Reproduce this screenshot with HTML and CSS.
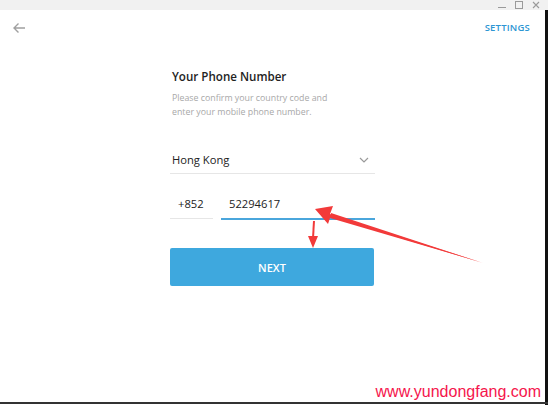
FILE: index.html
```html
<!DOCTYPE html>
<html>
<head>
<meta charset="utf-8">
<link rel="stylesheet" href="styles.css">
</head>
<body>
<div class="window">
  <div class="titlebar">
    <span class="ctl ctl-min"></span>
    <span class="ctl ctl-max"></span>
    <span class="ctl ctl-close">
      <svg width="8" height="8" viewBox="0 0 8 8"><path d="M1 1L7 7M7 1L1 7" stroke="#9a9a9a" stroke-width="1.1" fill="none"/></svg>
    </span>
  </div>
  <div class="topbar">
    <svg class="back" width="14" height="12" viewBox="0 0 14 12"><path d="M13 6H2M6.5 1.5L2 6l4.5 4.5" stroke="#a0a0a0" stroke-width="1.4" fill="none"/></svg>
    <span class="settings">SETTINGS</span>
  </div>
  <div class="form">
    <h1 class="title">Your Phone Number</h1>
    <p class="desc">Please confirm your country code and<br>enter your mobile phone number.</p>
    <div class="country">
      <span>Hong Kong</span>
      <svg width="10" height="6" viewBox="0 0 10 6"><path d="M1 1l4 4 4-4" stroke="#9a9a9a" stroke-width="1.2" fill="none"/></svg>
    </div>
    <div class="phone">
      <div class="code">+852</div>
      <div class="number">52294617</div>
    </div>
    <button class="next">NEXT</button>
  </div>
  <svg class="annot" width="548" height="405" viewBox="0 0 548 405">
    <polygon points="480,262 330,214 333,206 315,209 328,224 330,218" fill="#f23a3a"/>
    <polygon points="483,263 331,213 331,217" fill="#f23a3a"/>
    <line x1="314" y1="221" x2="313" y2="238" stroke="#f23a3a" stroke-width="2"/>
    <polygon points="308,236 318,236 313,248" fill="#f23a3a"/>
  </svg>
  <div class="watermark">www.yundongfang.com</div>
  <div class="edge-right"></div>
  <div class="edge-bottom"></div>
</div>
</body>
</html>
```
FILE: styles.css
```css
html, body {
  margin: 0;
  padding: 0;
  background: #ffffff;
}
.window {
  position: relative;
  width: 548px;
  height: 405px;
  overflow: hidden;
  font-family: "Open Sans", "Noto Sans", sans-serif;
  background: #ffffff;
}
.titlebar {
  height: 10px;
  background: #f1f1f1;
  display: flex;
  justify-content: flex-end;
  align-items: center;
  padding-right: 8px;
  gap: 9px;
}
.ctl {
  display: inline-block;
  width: 8px;
  height: 8px;
  box-sizing: border-box;
}
.ctl-min {
  border-bottom: 1px solid #9a9a9a;
  height: 6px;
}
.ctl-max {
  border: 1px solid #9a9a9a;
}
.ctl-close svg {
  display: block;
}
.topbar {
  height: 36px;
  display: flex;
  align-items: center;
  justify-content: space-between;
  padding: 0 18px 0 12px;
}
.back {
  display: block;
  margin-top: -1px;
}
.settings {
  color: #2d96d3;
  font-size: 9.5px;
  font-weight: 600;
  letter-spacing: 0.2px;
  margin-top: -1px;
}
.form {
  width: 205px;
  margin: 0 0 0 170px;
  padding-top: 23px;
}
.title {
  margin: 0 0 0 2px;
  font-size: 11.6px;
  font-weight: 600;
  color: #222222;
  line-height: 16px;
}
.desc {
  margin: 6px 0 0 2px;
  font-size: 8.8px;
  line-height: 14px;
  color: #a8a8a8;
}
.country {
  margin-top: 27px;
  height: 27px;
  border-bottom: 1px solid #e6e6e6;
  display: flex;
  align-items: center;
  justify-content: space-between;
  padding: 0 6px 0 2px;
  font-size: 11.2px;
  color: #222222;
}
.country span {
  margin-top: -1px;
}
.phone {
  margin-top: 18px;
  display: flex;
  gap: 8px;
  font-size: 11.2px;
  color: #222222;
}
.code {
  width: 43px;
  height: 27px;
  border-bottom: 1px solid #e6e6e6;
  padding-left: 8px;
  box-sizing: border-box;
  line-height: 24px;
}
.number {
  flex: 1;
  height: 28px;
  border-bottom: 2px solid #4aa6dc;
  padding-left: 8px;
  box-sizing: border-box;
  line-height: 24px;
}
.next {
  display: block;
  margin-top: 28px;
  width: 204px;
  height: 38px;
  border: none;
  border-radius: 2px;
  background: #3ea8de;
  color: #ffffff;
  font-family: "Open Sans", "Noto Sans", sans-serif;
  font-size: 11px;
  font-weight: 600;
  padding: 0;
}
.annot {
  position: absolute;
  left: 0;
  top: 0;
}
.watermark {
  position: absolute;
  right: 7px;
  bottom: 4px;
  font-family: "Liberation Sans", Arial, sans-serif;
  font-size: 16px;
  color: #f5154c;
}
.edge-right {
  position: absolute;
  top: 10px;
  right: 0;
  width: 3px;
  height: 395px;
  background: #111111;
}
.edge-bottom {
  position: absolute;
  left: 0;
  bottom: 1px;
  width: 548px;
  height: 2px;
  background: #333333;
}
```
